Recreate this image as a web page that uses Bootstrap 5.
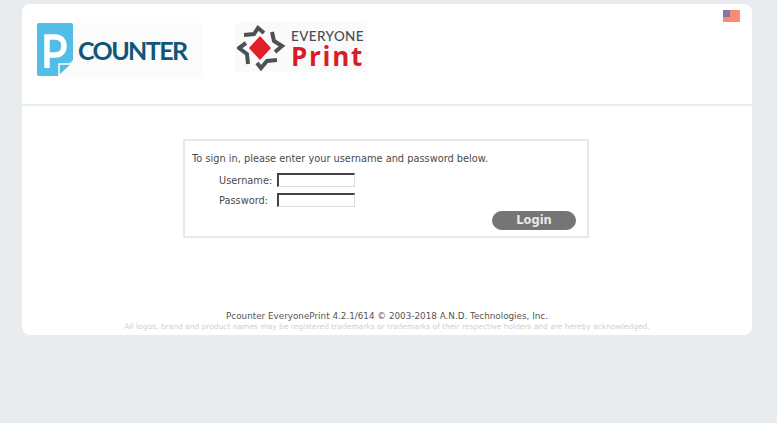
<!DOCTYPE html>
<html lang="en">

<head>
    <meta charset="UTF-8">
    <meta name="viewport" content="width=device-width, initial-scale=1.0">
    <title>Pcounter EveryonePrint</title>
    <link href="https://cdn.jsdelivr.net/npm/bootstrap@5.3.1/dist/css/bootstrap.min.css" rel="stylesheet">
    <style>
        html, body { height: 100%; }
        body { background: #e8ecef; font-family: "DejaVu Sans", sans-serif; color: #4a4a4a; overflow: hidden; }
        .page-shell { width: 730px; height: 331px; margin: 4px 0 0 22px; background: #fff; border-radius: 8px; }
        .head-area { height: 102px; border-bottom: 2px solid #e4f0f2; padding: 19px 12px 0 15px; }
        .logo-one { width: 166px; height: 54px; background: #fbfbfb; }
        .logo-one svg { width: 37px; height: 54px; flex: none; }
        .logo-one span { font: 700 25px/1 "Lato", sans-serif; color: #115578; margin-left: 4px; letter-spacing: -1.6px; }
        .logo-two { width: 132px; height: 49px; background: #fafafa; margin-left: 32px; }
        .logo-two svg { width: 50px; height: 48px; flex: none; margin-left: 2px; }
        .word-top { font: 500 13.5px/1 "Lato", sans-serif; color: #4a4d52; letter-spacing: .4px; margin-top: 3px; }
        .word-big { font: 700 26px/24px "Open Sans", sans-serif; color: #d91c2a; letter-spacing: 1.7px; }
        .flag-box { width: 17px; height: 12px; margin-top: -13px; background: #f88a78; }
        .flag-box i { display: block; width: 7px; height: 7px; background: #7d78ac; }
        .login-box { width: 406px; height: 99px; margin: 33px 0 0 161px; border: 2px solid #e6e8ea; padding: 10px 7px 0 7px; font-size: 9.8px; }
        .login-box p { margin: 0 0 3px; line-height: 16px; }
        .field-row { height: 20px; padding-left: 27px; }
        .field-row label { width: 58px; padding-top: 2px; }
        .field-row input { width: 78px; height: 14px; padding: 0; border-style: solid; border-width: 2px 1px 1px 2px; border-color: #444 #ddd #ddd #444; background: #fff; outline: 0; }
        .login-btn { width: 84px; height: 19px; margin: 1px 4px 0 0; padding: 0; border: 1px solid #777; border-radius: 10px; background: #757575; color: #e8e8e8; font-weight: 700; font-size: 11.5px; line-height: 15px; }
        .foot-area { margin-top: 73px; text-align: center; }
        .foot-main { font-size: 8.8px; line-height: 11px; color: #555; }
        .foot-legal { font-size: 7.5px; line-height: 10px; color: #d0d0d0; }
    </style>
</head>

<body>
    <div class="page-shell">
        <div class="head-area d-flex">
            <div class="logo-one d-flex align-items-center">
                <svg viewBox="0 0 37 54">
                    <path d="M2 0H34a2 2 0 0 1 2 2V37L21 53H2a2 2 0 0 1-2-2V2a2 2 0 0 1 2-2Z" fill="#52bde6"/>
                    <path d="M10 45V14H18C24 14 27 18 27 23C27 28 24 32 18 32H12" fill="none" stroke="#fff" stroke-width="5.5"/>
                    <path d="M22 53V41H35Z" fill="#52bde6" stroke="#fff" stroke-width="1.5" stroke-linejoin="round"/>
                </svg>
                <span>COUNTER</span>
            </div>
            <div class="logo-two d-flex align-items-center">
                <svg viewBox="0 0 50 48">
                    <path d="M23 12L34 24L23 36L12 24Z" fill="#e11f2b"/>
                    <g fill="none" stroke="#4c5155" stroke-width="4">
                        <path d="M7 11L17 10L21 4L27 9"/>
                        <path d="M35 8L37 17L45 22L38 28"/>
                        <path d="M40 36L30 37L24 44L20 39"/>
                        <path d="M11 40L10 30L2 24L9 19"/>
                    </g>
                </svg>
                <div class="ms-1">
                    <div class="word-top">EVERYONE</div>
                    <div class="word-big">Print</div>
                </div>
            </div>
            <div class="flag-box ms-auto"><i></i></div>
        </div>

        <form class="login-box">
            <p>To sign in, please enter your username and password below.</p>
            <div class="field-row d-flex align-items-center">
                <label for="username">Username:</label>
                <input type="text" id="username">
            </div>
            <div class="field-row d-flex align-items-center">
                <label for="password">Password:</label>
                <input type="password" id="password">
            </div>
            <div class="d-flex justify-content-end">
                <button type="button" class="login-btn">Login</button>
            </div>
        </form>

        <div class="foot-area">
            <div class="foot-main">Pcounter EveryonePrint 4.2.1/614 © 2003-2018 A.N.D. Technologies, Inc.</div>
            <div class="foot-legal">All logos, brand and product names may be registered trademarks or trademarks of their respective holders and are hereby acknowledged.</div>
        </div>
    </div>

    <script src="https://cdn.jsdelivr.net/npm/bootstrap@5.3.1/dist/js/bootstrap.bundle.min.js"></script>
</body>

</html>
